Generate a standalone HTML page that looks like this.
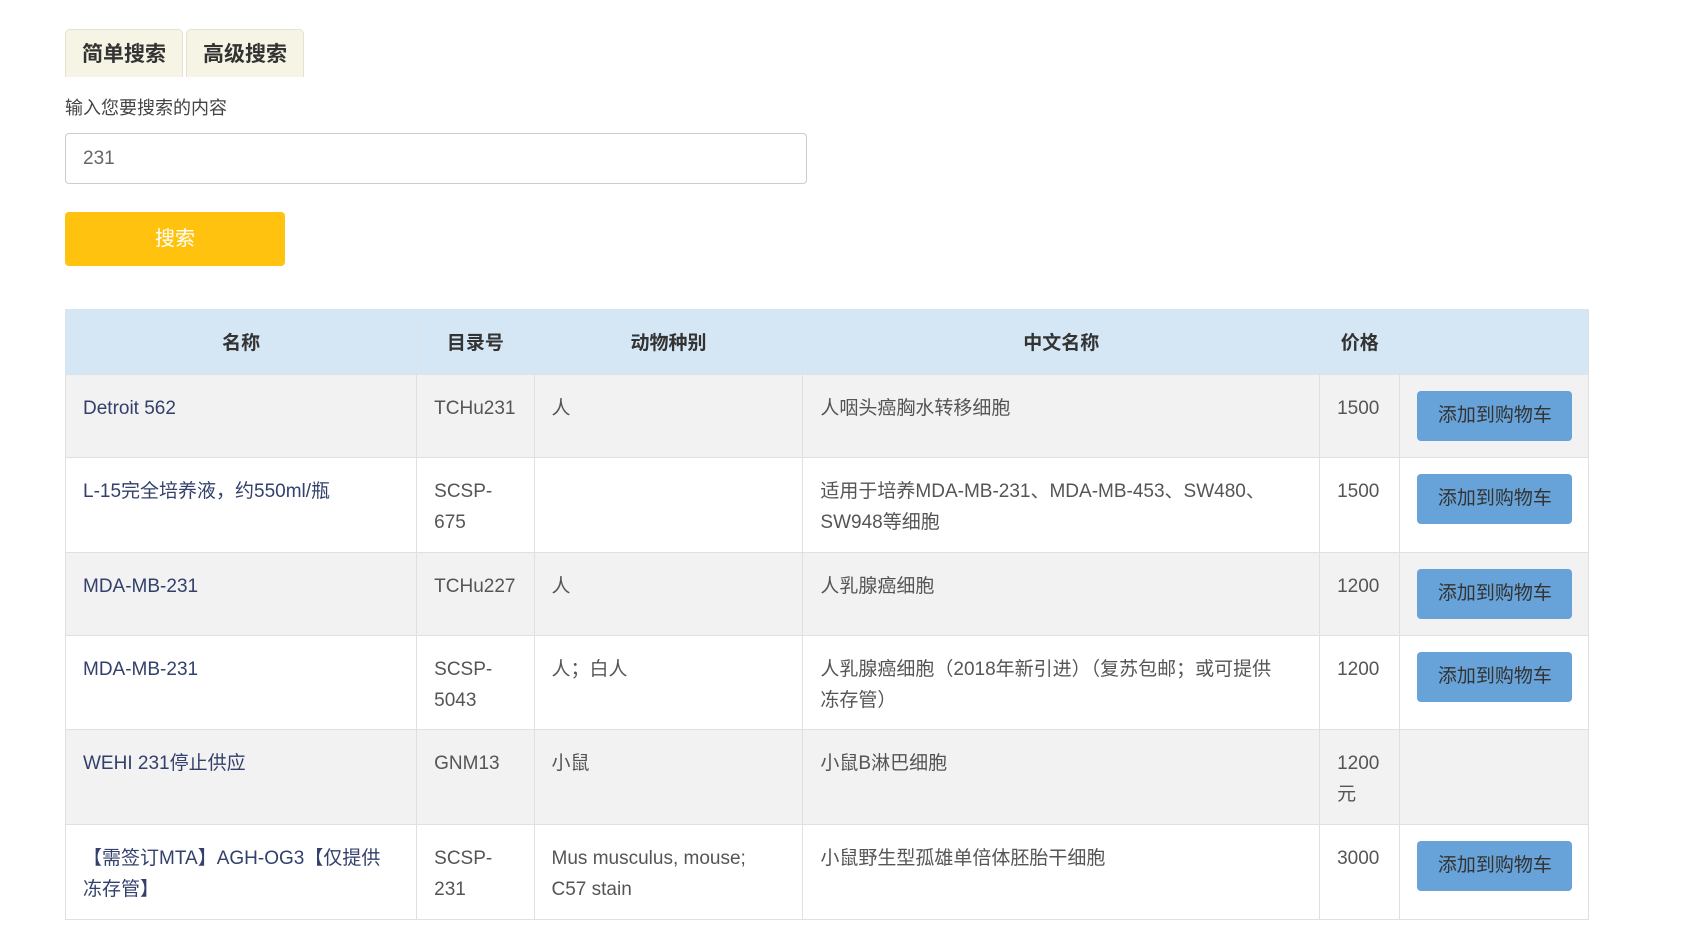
<!DOCTYPE html>
<html><head><meta charset="utf-8"><style>
body{margin:0;background:#fff;font-family:"Liberation Sans","Noto Sans CJK SC",sans-serif;color:#555;width:1701px;height:930px;overflow:hidden;position:relative}
.tab{position:absolute;top:29px;height:48px;background:#f6f4e4;border:1px solid #e4e2cf;border-bottom:none;border-radius:5px 5px 0 0;font-weight:bold;font-size:21px;color:#333;line-height:50px;text-align:center;box-sizing:border-box}
.lbl{position:absolute;left:65px;top:94px;font-size:18px;color:#444}
.inp{position:absolute;left:65px;top:133px;width:742px;height:51px;border:1px solid #ccc;border-radius:4px;box-sizing:border-box;font-size:19px;line-height:49px;padding-left:17px;color:#666}
.btn{position:absolute;left:65px;top:212px;width:220px;height:54px;background:#ffc20e;border-radius:4px;color:#fff;font-size:20px;line-height:54px;text-align:center}
table{position:absolute;left:65px;top:309px;border-collapse:collapse;width:1524px;table-layout:fixed;font-size:19px}
th{background:#d5e6f4;height:65px;font-weight:bold;color:#333;font-size:19px;border:1px solid #dde3ea;border-top:none;padding:0}
td{border:1px solid #e0e0e0;vertical-align:top;padding:18px 17px 0;line-height:31px;white-space:nowrap}
tr.g td{background:#f2f2f2}
td.n{color:#33406b}
.cart{display:block;width:155px;height:50px;background:#67a3d8;border-radius:4px;color:#333;font-size:19px;line-height:50px;text-align:center;margin:-2px 0 0 0}
</style></head><body>
<div class="tab" style="left:65px;width:118px">简单搜索</div>
<div class="tab" style="left:186px;width:118px">高级搜索</div>
<div class="lbl">输入您要搜索的内容</div>
<div class="inp">231</div>
<div class="btn">搜索</div>
<table>
<colgroup><col style="width:350px"><col style="width:117px"><col style="width:268px"><col style="width:515px"><col style="width:80px"><col style="width:188px"></colgroup>
<tr><th>名称</th><th>目录号</th><th>动物种别</th><th>中文名称</th><th>价格</th><th></th></tr>
<tr class="g" style="height:83px"><td class="n">Detroit 562</td><td>TCHu231</td><td>人</td><td>人咽头癌胸水转移细胞</td><td>1500</td><td><span class="cart">添加到购物车</span></td></tr>
<tr style="height:95px"><td class="n">L-15完全培养液，约550ml/瓶</td><td>SCSP-<br>675</td><td></td><td>适用于培养MDA-MB-231、MDA-MB-453、SW480、<br>SW948等细胞</td><td>1500</td><td><span class="cart">添加到购物车</span></td></tr>
<tr class="g" style="height:83px"><td class="n">MDA-MB-231</td><td>TCHu227</td><td>人</td><td>人乳腺癌细胞</td><td>1200</td><td><span class="cart">添加到购物车</span></td></tr>
<tr style="height:94px"><td class="n">MDA-MB-231</td><td>SCSP-<br>5043</td><td>人；白人</td><td>人乳腺癌细胞（2018年新引进）（复苏包邮；或可提供<br>冻存管）</td><td>1200</td><td><span class="cart">添加到购物车</span></td></tr>
<tr class="g" style="height:95px"><td class="n">WEHI 231停止供应</td><td>GNM13</td><td>小鼠</td><td>小鼠B淋巴细胞</td><td>1200<br>元</td><td></td></tr>
<tr style="height:95px"><td class="n">【需签订MTA】AGH-OG3【仅提供<br>冻存管】</td><td>SCSP-<br>231</td><td>Mus musculus, mouse;<br>C57 stain</td><td>小鼠野生型孤雄单倍体胚胎干细胞</td><td>3000</td><td><span class="cart">添加到购物车</span></td></tr>
</table>
</body></html>
